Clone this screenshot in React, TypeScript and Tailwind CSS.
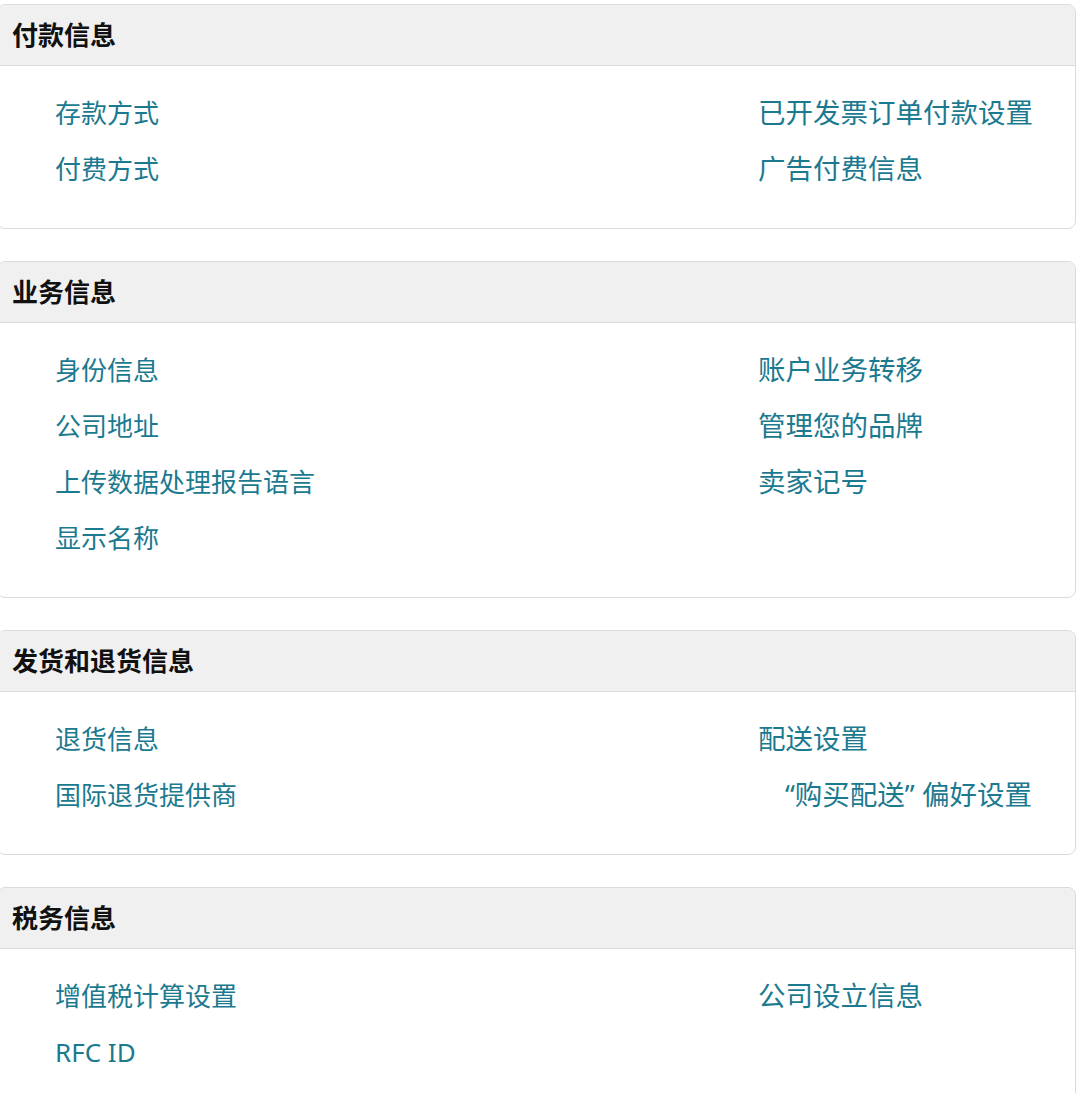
import React from "react";

type Section = {
    title: string;
    left: string[];
    right: string[];
};

const sections: Section[] = [
    {
        title: "付款信息",
        left: ["存款方式", "付费方式"],
        right: ["已开发票订单付款设置", "广告付费信息"],
    },
    {
        title: "业务信息",
        left: ["身份信息", "公司地址", "上传数据处理报告语言", "显示名称"],
        right: ["账户业务转移", "管理您的品牌", "卖家记号"],
    },
    {
        title: "发货和退货信息",
        left: ["退货信息", "国际退货提供商"],
        right: ["配送设置", "“购买配送” 偏好设置"],
    },
    {
        title: "税务信息",
        left: ["增值税计算设置", "RFC ID"],
        right: ["公司设立信息"],
    },
];

const LinkColumn = ({ items, wide }: { items: string[]; wide?: boolean }) => (
    <div className="flex flex-col">
        {items.map((item) => (
            <a
                key={item}
                href="#"
                className={
                    "h-[56px] flex items-center text-[#1b7a8f] whitespace-nowrap " +
                    (wide ? "text-[27.5px]" : "text-[26px]") +
                    (item.startsWith("“") ? " pl-[27px]" : "")
                }
            >
                {item}
            </a>
        ))}
    </div>
);

const SectionCard = ({ section }: { section: Section }) => (
    <div className="shrink-0 -ml-[3px] w-[1079px] border border-[#d9dcdc] rounded-[8px] overflow-hidden bg-white">
        <div className="h-[61px] bg-[#f0f0f0] border-b border-[#d9dcdc] flex items-center px-[14px]">
            <h3 className="text-[26px] font-bold text-[#111111]">{section.title}</h3>
        </div>
        <div className="flex pt-[19px] pb-[31px]">
            <div className="w-[760px] pl-[57px]">
                <LinkColumn items={section.left} />
            </div>
            <LinkColumn items={section.right} wide />
        </div>
    </div>
);

export default function App() {
    return (
        <div
            className="w-[1080px] h-[1093px] overflow-hidden bg-white pt-[4px] flex flex-col gap-[32px]"
            style={{ fontFamily: '"Noto Sans", "Noto Sans CJK SC", sans-serif' }}
        >
            {sections.map((section) => (
                <SectionCard key={section.title} section={section} />
            ))}
        </div>
    );
}
